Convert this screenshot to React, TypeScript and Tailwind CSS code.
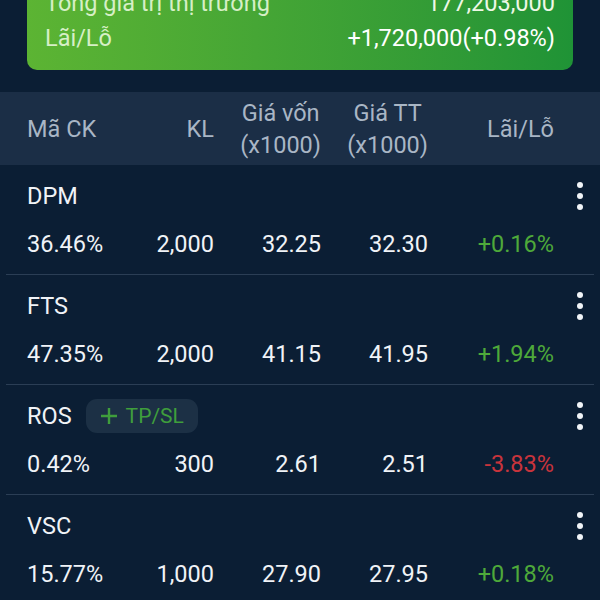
import React from "react";

type Row = {
  code: string;
  pct: string;
  kl: string;
  von: string;
  tt: string;
  pl: string;
  up: boolean;
  tpsl?: boolean;
};

const rows: Row[] = [
  { code: "DPM", pct: "36.46%", kl: "2,000", von: "32.25", tt: "32.30", pl: "+0.16%", up: true },
  { code: "FTS", pct: "47.35%", kl: "2,000", von: "41.15", tt: "41.95", pl: "+1.94%", up: true },
  { code: "ROS", pct: "0.42%", kl: "300", von: "2.61", tt: "2.51", pl: "-3.83%", up: false, tpsl: true },
  { code: "VSC", pct: "15.77%", kl: "1,000", von: "27.90", tt: "27.95", pl: "+0.18%", up: true },
];

function Dots() {
  return (
    <svg width="12" height="30" viewBox="0 0 12 30" className="block">
      <circle cx="6" cy="4" r="3" fill="#f2f5f8" />
      <circle cx="6" cy="15" r="3" fill="#f2f5f8" />
      <circle cx="6" cy="26" r="3" fill="#f2f5f8" />
    </svg>
  );
}

export default function App() {
  return (
    <div
      className="w-[600px] h-[600px] overflow-hidden bg-[#0b1e34] text-[23.5px] leading-[34px]"
      style={{ fontFamily: "Roboto, 'Noto Sans', sans-serif" }}
    >
      <div className="mx-[27px] mt-[-24px] pt-[10px] pb-[15px] px-[18px] rounded-[10px] bg-gradient-to-r from-[#5cb433] to-[#1f9336]">
        <div className="flex justify-between">
          <span className="text-[#d6efc6]">Tổng giá trị thị trường</span>
          <span className="text-[#eef8e6]">177,203,000</span>
        </div>
        <div className="flex justify-between mt-px">
          <span className="text-[#d6efc6]">Lãi/Lỗ</span>
          <span className="text-white">+1,720,000(+0.98%)</span>
        </div>
      </div>

      <div className="mt-[22px] h-[73px] bg-[#1b2e46] pl-[27px] text-[#a9b6c5] leading-[32px]">
        <div className="grid grid-cols-[107px_80px_107px_107px_126px] h-full items-center">
          <div>Mã CK</div>
          <div className="text-right">KL</div>
          <div className="flex justify-end">
            <div className="text-center">
              <div>Giá vốn</div>
              <div>(x1000)</div>
            </div>
          </div>
          <div className="flex justify-end">
            <div className="text-center">
              <div>Giá TT</div>
              <div>(x1000)</div>
            </div>
          </div>
          <div className="text-right">Lãi/Lỗ</div>
        </div>
      </div>

      {rows.map((r) => (
        <div key={r.code}>
          <div className="pl-[27px] pr-[14px] pt-[14px] pb-[13px] text-[#f0f3f7]">
            <div className="flex items-center justify-between h-[34px]">
              <div className="flex items-center gap-[14px]">
                <span>{r.code}</span>
                {r.tpsl && (
                  <span className="flex items-center h-[34px] px-[14px] gap-[8px] rounded-[11px] bg-[#1c3045] text-[#3f9e3c] text-[21px]">
                    <svg width="18" height="18" viewBox="0 0 18 18">
                      <path d="M9 1v16M1 9h16" stroke="#3f9e3c" strokeWidth="2.4" />
                    </svg>
                    <span>TP/SL</span>
                  </span>
                )}
              </div>
              <Dots />
            </div>
            <div className="grid grid-cols-[107px_80px_107px_107px_126px] h-[34px] mt-[14px] items-center">
              <div>{r.pct}</div>
              <div className="text-right">{r.kl}</div>
              <div className="text-right">{r.von}</div>
              <div className="text-right">{r.tt}</div>
              <div className={"text-right " + (r.up ? "text-[#4ea93a]" : "text-[#c8343c]")}>{r.pl}</div>
            </div>
          </div>
          <div className="mx-[6px] h-px bg-[#2b3e55]" />
        </div>
      ))}
    </div>
  );
}
